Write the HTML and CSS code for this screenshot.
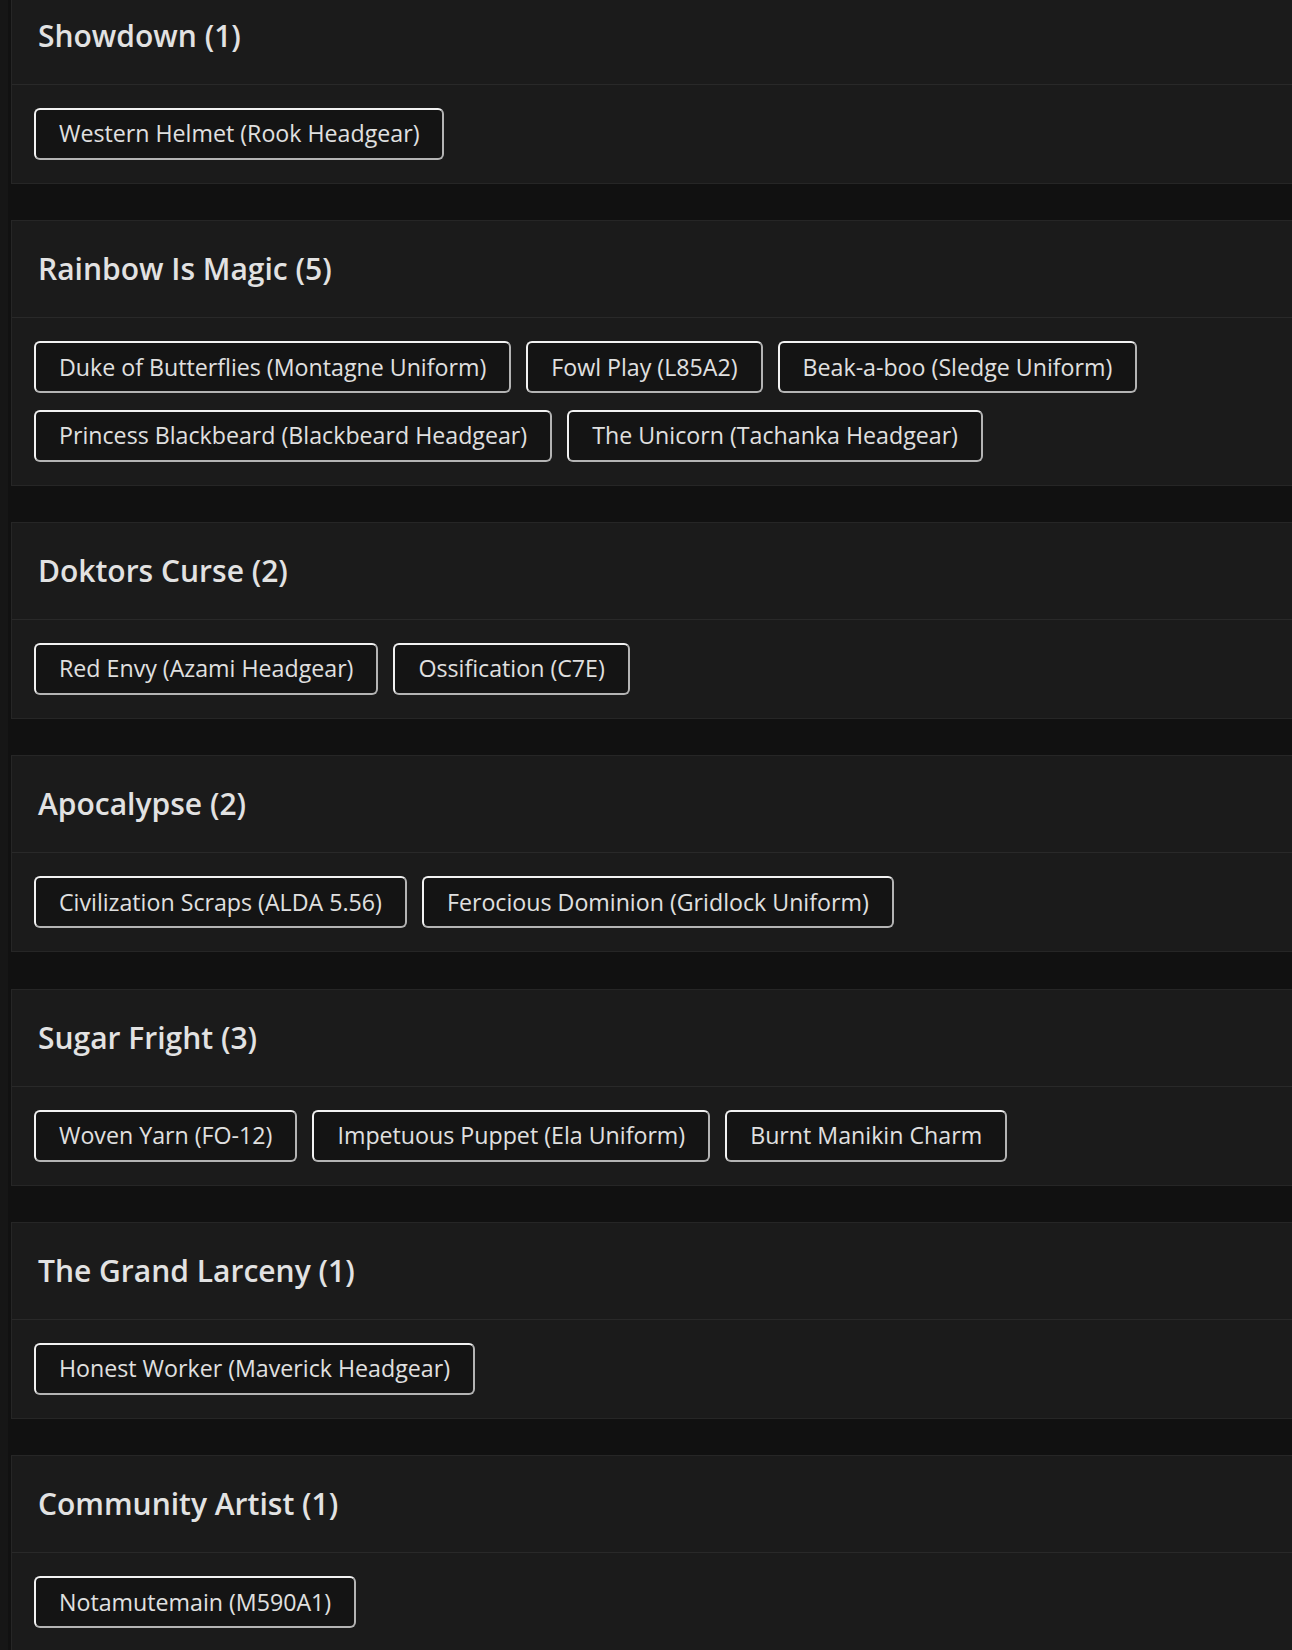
FILE: index.html
```html
<!DOCTYPE html>
<html lang="en">
<head>
<meta charset="utf-8">
<title>Events</title>
<link rel="stylesheet" href="styles.css">
</head>
<body>
<div class="list">
  <section class="card">
    <header class="card-head"><h2 class="card-title">Showdown (1)</h2></header>
    <div class="card-body">
      <span class="chip">Western Helmet (Rook Headgear)</span>
    </div>
  </section>
  <section class="card">
    <header class="card-head"><h2 class="card-title">Rainbow Is Magic (5)</h2></header>
    <div class="card-body">
      <span class="chip">Duke of Butterflies (Montagne Uniform)</span>
      <span class="chip">Fowl Play (L85A2)</span>
      <span class="chip">Beak-a-boo (Sledge Uniform)</span>
      <span class="chip">Princess Blackbeard (Blackbeard Headgear)</span>
      <span class="chip">The Unicorn (Tachanka Headgear)</span>
    </div>
  </section>
  <section class="card">
    <header class="card-head"><h2 class="card-title">Doktors Curse (2)</h2></header>
    <div class="card-body">
      <span class="chip">Red Envy (Azami Headgear)</span>
      <span class="chip">Ossification (C7E)</span>
    </div>
  </section>
  <section class="card">
    <header class="card-head"><h2 class="card-title">Apocalypse (2)</h2></header>
    <div class="card-body">
      <span class="chip">Civilization Scraps (ALDA 5.56)</span>
      <span class="chip">Ferocious Dominion (Gridlock Uniform)</span>
    </div>
  </section>
  <section class="card">
    <header class="card-head"><h2 class="card-title">Sugar Fright (3)</h2></header>
    <div class="card-body">
      <span class="chip">Woven Yarn (FO-12)</span>
      <span class="chip">Impetuous Puppet (Ela Uniform)</span>
      <span class="chip">Burnt Manikin Charm</span>
    </div>
  </section>
  <section class="card">
    <header class="card-head"><h2 class="card-title">The Grand Larceny (1)</h2></header>
    <div class="card-body">
      <span class="chip">Honest Worker (Maverick Headgear)</span>
    </div>
  </section>
  <section class="card">
    <header class="card-head"><h2 class="card-title">Community Artist (1)</h2></header>
    <div class="card-body">
      <span class="chip">Notamutemain (M590A1)</span>
    </div>
  </section>
</div>
</body>
</html>
```

FILE: styles.css
```css
html, body {
  margin: 0;
  padding: 0;
  overflow: hidden;
}
body {
  background: #161616;
  font-family: "Open Sans", "Liberation Sans", sans-serif;
  color: #e4e4e4;
}
.list {
  margin: -13px -40px 0 8px;
  padding: 0 0 0 3px;
  background: #111111;
  display: flex;
  flex-direction: column;
  gap: 36.3px;
}
.card {
  background: #1b1b1b;
  border: 1px solid #262626;
}
.card-head {
  height: 96px;
  display: flex;
  align-items: center;
  padding-left: 26px;
  border-bottom: 1px solid #292929;
}
.card-title {
  margin: 0;
  font-size: 30px;
  font-weight: 600;
  color: #e2e2e2;
  line-height: 1;
}
.card-body {
  padding: 23px 22px;
  display: flex;
  flex-wrap: wrap;
  gap: 16.5px 15px;
}
.chip {
  box-sizing: border-box;
  height: 52px;
  display: inline-flex;
  align-items: center;
  padding: 0 23px;
  background: #141414;
  border: 2px solid #f2f2f2;
  border-right-color: #b4b4b4;
  border-bottom-color: #b4b4b4;
  border-radius: 6px;
  font-size: 23.2px;
  color: #e0e0e0;
  line-height: 1;
}
```
